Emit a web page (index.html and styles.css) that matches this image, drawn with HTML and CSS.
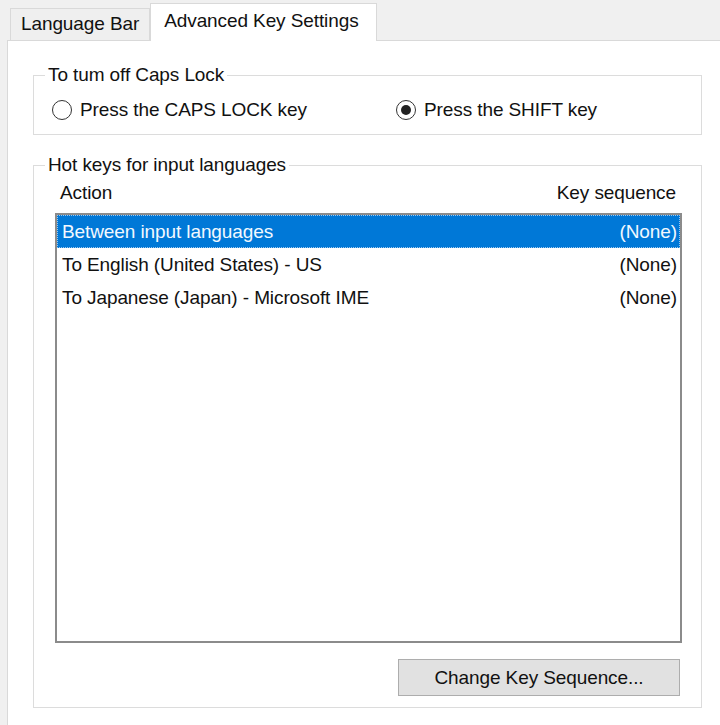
FILE: index.html
```html
<!DOCTYPE html>
<html>
<head>
<meta charset="utf-8">
<link rel="stylesheet" href="styles.css">
</head>
<body>
<div class="window">
  <div class="tabs">
    <div class="tab">Language Bar</div>
    <div class="tab active">Advanced Key Settings</div>
  </div>
  <div class="panel">
    <fieldset class="group caps">
      <legend>To tum off Caps Lock</legend>
      <div class="radios">
        <label class="radio first"><span class="circle"></span>Press the CAPS LOCK key</label>
        <label class="radio"><span class="circle checked"></span>Press the SHIFT key</label>
      </div>
    </fieldset>
    <fieldset class="group hotkeys">
      <legend>Hot keys for input languages</legend>
      <div class="header"><span>Action</span><span>Key sequence</span></div>
      <div class="listbox">
        <div class="row selected"><span>Between input languages</span><span>(None)</span></div>
        <div class="row"><span>To English (United States) - US</span><span>(None)</span></div>
        <div class="row"><span>To Japanese (Japan) - Microsoft IME</span><span>(None)</span></div>
      </div>
      <div class="actions">
        <button class="btn">Change Key Sequence...</button>
      </div>
    </fieldset>
  </div>
</div>
</body>
</html>
```
FILE: styles.css
```css
html, body {
  margin: 0;
  padding: 0;
  background: #f0f0f0;
}
.window {
  width: 720px;
  height: 725px;
  overflow: hidden;
  background: #f0f0f0;
  font-family: "Liberation Sans", Arial, sans-serif;
  font-size: 19px;
  letter-spacing: -0.1px;
  color: #111;
  display: flex;
  flex-direction: column;
}
.tabs {
  display: flex;
  align-items: flex-end;
  height: 40px;
  padding-left: 10px;
  flex: none;
}
.tab {
  box-sizing: border-box;
  height: 32px;
  line-height: 30px;
  padding: 0 10px 0 10px;
  border: 1px solid #d9d9d9;
  border-bottom: none;
  background: #efefef;
  white-space: nowrap;
}
.tab.active {
  height: 38px;
  line-height: 34px;
  padding: 0 17px 0 13px;
  margin-bottom: -1px;
  background: #fff;
  position: relative;
  z-index: 1;
}
.panel {
  flex: 1;
  margin-left: 7px;
  border-top: 1px solid #d9d9d9;
  border-left: 1px solid #d9d9d9;
  background: #fff;
  padding: 23px 0 0 25px;
}
.group {
  box-sizing: border-box;
  width: 669px;
  margin: 0;
  padding: 0;
  border: 1px solid #dcdcdc;
  min-width: 0;
}
.group legend {
  margin-left: 11px;
  padding: 0 3px;
  line-height: 22px;
}
.caps {
  padding: 12px 0 12px 0;
}
.radios {
  display: flex;
  align-items: center;
  height: 24px;
  padding-left: 18px;
}
.radio {
  display: flex;
  align-items: center;
  gap: 8px;
  white-space: nowrap;
}
.radio.first {
  width: 344px;
}
.circle {
  box-sizing: border-box;
  width: 20px;
  height: 20px;
  border: 1.5px solid #333;
  border-radius: 50%;
  background: #fff;
  display: flex;
  align-items: center;
  justify-content: center;
}
.circle.checked::after {
  content: "";
  width: 10px;
  height: 10px;
  border-radius: 50%;
  background: #222;
}
.hotkeys {
  margin-top: 19px;
  padding: 0 0 11px 0;
}
.header {
  display: flex;
  justify-content: space-between;
  line-height: 22px;
  margin-top: 6px;
  padding: 0 25px 0 26px;
}
.listbox {
  box-sizing: border-box;
  height: 430px;
  margin: 9px 19px 0 21px;
  border: 2px solid #8b8b8b;
  background: #fff;
}
.row {
  box-sizing: border-box;
  height: 33px;
  display: flex;
  align-items: center;
  justify-content: space-between;
  padding: 0 3px 0 5px;
  white-space: nowrap;
}
.row.selected {
  background: #0078d7;
  color: #f2f8ff;
  outline: 1px dotted #9cc7ee;
  outline-offset: -1px;
}
.actions {
  display: flex;
  justify-content: flex-end;
  margin-top: 16px;
  padding-right: 21px;
}
.btn {
  box-sizing: border-box;
  width: 282px;
  height: 37px;
  background: #e1e1e1;
  border: 1px solid #adadad;
  font-family: "Liberation Sans", Arial, sans-serif;
  font-size: 19px;
  letter-spacing: -0.1px;
  color: #111;
  padding: 0;
}
```
